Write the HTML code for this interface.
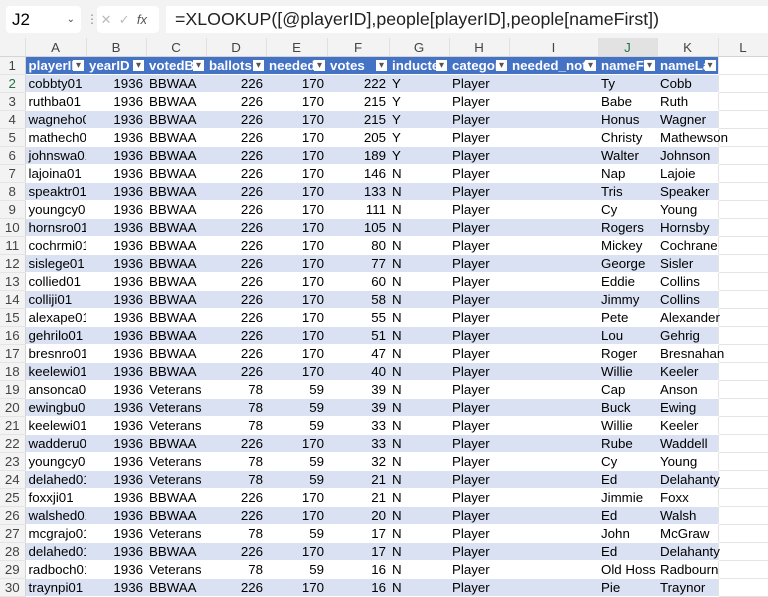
<!DOCTYPE html><html><head><style>
body{margin:0;width:768px;height:597px;overflow:hidden;background:#fff;font-family:"Liberation Sans",sans-serif;position:relative}
.top{position:absolute;left:0;top:0;width:768px;height:38px;background:#f3f3f3}
.nb{position:absolute;left:6px;top:6px;width:75px;height:27px;background:#fff;border-radius:4px;font-size:17px;line-height:27px;text-indent:6px}
.fx{position:absolute;left:97px;top:6px;width:62px;height:27px;background:#fff;border-radius:4px;color:#bbb;font-size:13px;line-height:27px}
.fb{position:absolute;left:166px;top:6px;width:602px;height:27px;background:#fff;font-size:17.8px;line-height:27px;text-indent:9px;color:#222}
table{position:absolute;left:0;top:38px;width:768px;border-collapse:collapse;table-layout:fixed;font-size:13.3px}
td{height:17px;padding:0 3px;white-space:nowrap;overflow:hidden;border-bottom:1px solid #fff;line-height:17px}
tr.ch td{height:18px;background:#f3f3f3;color:#444;text-align:center;border-bottom:1px solid #d4d4d4;border-right:1px solid #e0e0e0}
td.rh{background:#f3f3f3;color:#444;text-align:center;padding:0;border-right:1px solid #d4d4d4;border-bottom:1px solid #e4e4e4}
tr.h td.t{background:#4472c4;color:#fff;font-weight:bold;position:relative;padding-right:0;overflow:hidden}
tr.h td.t span{display:block;overflow:hidden;margin-right:13px}
tr.h td.t:after{content:"▾";position:absolute;right:2px;top:3px;width:11px;height:11px;background:#fff;color:#555;font-size:10px;line-height:11px;text-align:center;font-weight:normal}
tr.b td.t{background:#d9e1f2}
td.n{text-align:right}
td.l{border-bottom:1px solid #e4e4e4;border-left:1px solid #e4e4e4}
</style></head><body>
<div class="top"><div class="nb">J2 <span style="position:absolute;right:6px;font-size:10px;color:#444">⌄</span></div>
<span style="position:absolute;left:86px;top:12px;color:#888;font-size:12px">⋮</span>
<div class="fx">&nbsp;✕ &nbsp;✓ &nbsp;<i style="color:#555">fx</i> ⌄</div>
<div class="fb">=XLOOKUP([@playerID],people[playerID],people[nameFirst])</div></div>
<table>
<colgroup><col style="width:25px"><col style="width:61px"><col style="width:60px"><col style="width:60px"><col style="width:60px"><col style="width:61px"><col style="width:62px"><col style="width:60px"><col style="width:60px"><col style="width:89px"><col style="width:59px"><col style="width:61px"><col style="width:50px"></colgroup>
<tr class="ch"><td></td><td>A</td><td>B</td><td>C</td><td>D</td><td>E</td><td>F</td><td>G</td><td>H</td><td>I</td><td style="background:#e2e2e2;color:#217346">J</td><td>K</td><td>L</td></tr>
<tr class="h"><td class="rh">1</td><td class="t"><span>playerID</span></td><td class="t"><span>yearID</span></td><td class="t"><span>votedBy</span></td><td class="t"><span>ballots</span></td><td class="t"><span>needed</span></td><td class="t"><span>votes</span></td><td class="t"><span>inducted</span></td><td class="t"><span>category</span></td><td class="t"><span>needed_note</span></td><td class="t"><span>nameFirst</span></td><td class="t"><span>nameLast</span></td><td class="l"></td></tr>
<tbody id="b"></tbody>
</table>
<script>
var d=[["cobbty01",1936,"BBWAA",226,170,222,"Y","Ty","Cobb"],["ruthba01",1936,"BBWAA",226,170,215,"Y","Babe","Ruth"],["wagneho01",1936,"BBWAA",226,170,215,"Y","Honus","Wagner"],["mathech01",1936,"BBWAA",226,170,205,"Y","Christy","Mathewson"],["johnswa01",1936,"BBWAA",226,170,189,"Y","Walter","Johnson"],["lajoina01",1936,"BBWAA",226,170,146,"N","Nap","Lajoie"],["speaktr01",1936,"BBWAA",226,170,133,"N","Tris","Speaker"],["youngcy01",1936,"BBWAA",226,170,111,"N","Cy","Young"],["hornsro01",1936,"BBWAA",226,170,105,"N","Rogers","Hornsby"],["cochrmi01",1936,"BBWAA",226,170,80,"N","Mickey","Cochrane"],["sislege01",1936,"BBWAA",226,170,77,"N","George","Sisler"],["collied01",1936,"BBWAA",226,170,60,"N","Eddie","Collins"],["colliji01",1936,"BBWAA",226,170,58,"N","Jimmy","Collins"],["alexape01",1936,"BBWAA",226,170,55,"N","Pete","Alexander"],["gehrilo01",1936,"BBWAA",226,170,51,"N","Lou","Gehrig"],["bresnro01",1936,"BBWAA",226,170,47,"N","Roger","Bresnahan"],["keelewi01",1936,"BBWAA",226,170,40,"N","Willie","Keeler"],["ansonca01",1936,"Veterans",78,59,39,"N","Cap","Anson"],["ewingbu01",1936,"Veterans",78,59,39,"N","Buck","Ewing"],["keelewi01",1936,"Veterans",78,59,33,"N","Willie","Keeler"],["wadderu01",1936,"BBWAA",226,170,33,"N","Rube","Waddell"],["youngcy01",1936,"Veterans",78,59,32,"N","Cy","Young"],["delahed01",1936,"Veterans",78,59,21,"N","Ed","Delahanty"],["foxxji01",1936,"BBWAA",226,170,21,"N","Jimmie","Foxx"],["walshed01",1936,"BBWAA",226,170,20,"N","Ed","Walsh"],["mcgrajo01",1936,"Veterans",78,59,17,"N","John","McGraw"],["delahed01",1936,"BBWAA",226,170,17,"N","Ed","Delahanty"],["radboch01",1936,"Veterans",78,59,16,"N","Old Hoss","Radbourn"],["traynpi01",1936,"BBWAA",226,170,16,"N","Pie","Traynor"]];
var h="";d.forEach(function(r,i){h+='<tr class="'+(i%2==0?'b':'')+'"><td class="rh"'+(i==0?' style="color:#217346"':'')+'>'+(i+2)+'</td><td class="t">'+r[0]+'</td><td class="t n">'+r[1]+'</td><td class="t">'+r[2]+'</td><td class="t n">'+r[3]+'</td><td class="t n">'+r[4]+'</td><td class="t n">'+r[5]+'</td><td class="t">'+r[6]+'</td><td class="t">Player</td><td class="t"></td><td class="t">'+r[7]+'</td><td class="t" style="overflow:visible">'+r[8]+'</td><td class="l"></td></tr>';});
document.getElementById("b").innerHTML=h;
</script>
</body></html>
